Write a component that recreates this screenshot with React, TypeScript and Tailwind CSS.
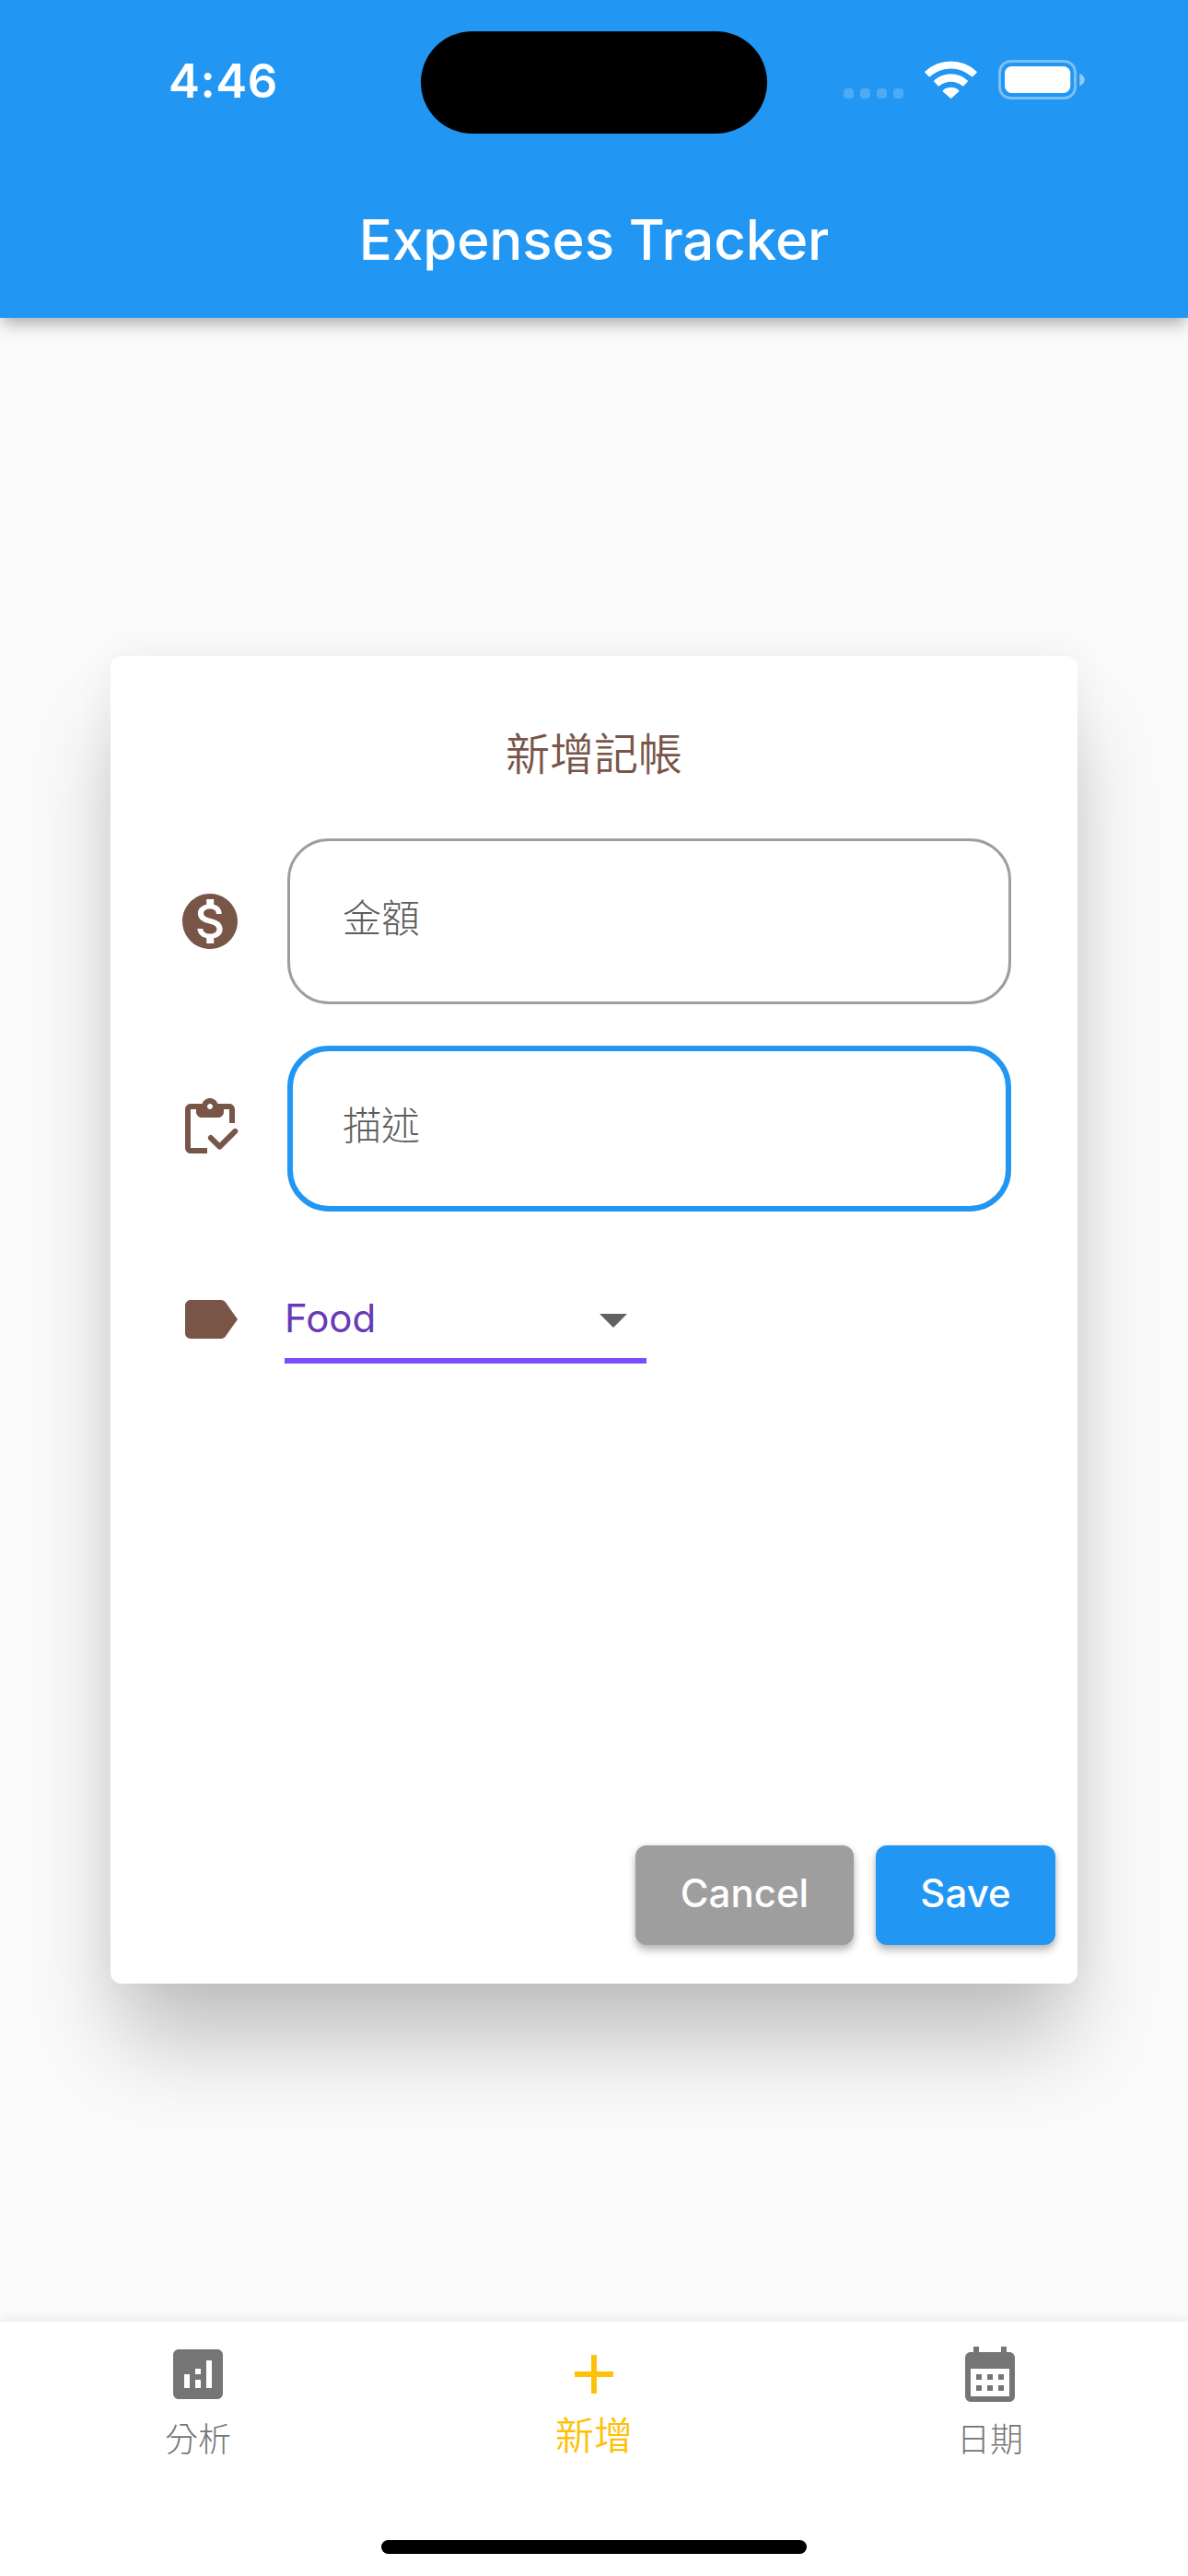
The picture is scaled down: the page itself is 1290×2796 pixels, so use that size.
import type { ReactNode } from "react";
import { MdAdd, MdAnalytics, MdArrowDropDown, MdCalendarMonth, MdLabel, MdMonetizationOn } from "react-icons/md";

function WifiIcon() {
  return (
    <svg width="57" height="42" viewBox="0 0 57 42" fill="#fff" className="ml-[23px]">
      <path d="M0.5 14.1Q-0.2 13.3 0.6 12.6A40.5 40.5 0 0 1 56.4 12.6Q57.2 13.3 56.5 14.1L52.3 18.1Q51.7 18.7 51 18.1A33.5 33.5 0 0 0 6 18.1Q5.3 18.7 4.7 18.1Z" />
      <path d="M10.4 23.8Q9.6 23 10.5 22.2A26.6 26.6 0 0 1 46.5 22.2Q47.4 23 46.6 23.8L42.4 28.2Q41.7 28.9 41 28.2A19.5 19.5 0 0 0 16 28.2Q15.3 28.9 14.6 28.2Z" />
      <path d="M20 34.4Q19.3 33.7 20 33A12.6 12.6 0 0 1 37 33Q37.7 33.7 37 34.4L29.2 41.6Q28.5 42.2 27.8 41.6Z" />
    </svg>
  );
}

function BatteryIcon() {
  return (
    <svg width="94" height="43" viewBox="0 0 94 43" className="ml-[23px]">
      <rect x="1.5" y="1.5" width="82" height="40" rx="12" fill="none" stroke="#fff" strokeOpacity=".4" strokeWidth="3" />
      <rect x="7" y="7" width="71.3" height="29" rx="7.5" fill="#fff" />
      <path d="M88.3 14.8C91.6 16 93.7 18.6 93.7 21.6S91.6 27.2 88.3 28.4z" fill="#fff" fillOpacity=".5" />
    </svg>
  );
}

function ClipboardCheckIcon() {
  return (
    <svg width="72" height="72" viewBox="0 0 24 24" fill="currentColor" className="shrink-0 text-[#795548]">
      <path d="M5 5h2v1c0 1.1.9 2 2 2h6c1.1 0 2-.9 2-2V5h2v5h2V5c0-1.1-.9-2-2-2h-4.18C14.4 1.84 13.3 1 12 1s-2.4.84-2.82 2H5c-1.1 0-2 .9-2 2v14c0 1.1.9 2 2 2h6v-2H5V5zm7-2c.55 0 1 .45 1 1s-.45 1-1 1-1-.45-1-1 .45-1 1-1z" />
      <path d="M12.3 15.35l3.2 3.2L21.1 12.95" fill="none" stroke="currentColor" strokeWidth="2" strokeLinecap="round" strokeLinejoin="round" />
    </svg>
  );
}

function StatusBar() {
  return (
    <div className="flex h-[178px] items-center">
      <div className="w-[457px] pb-[3px] pl-[183px] text-[51px] leading-none font-semibold tracking-[0.5px]">4:46</div>
      <div className="h-[111px] w-[376px] rounded-full bg-black" />
      <div className="flex items-end pb-[5px] pl-[83px]">
        <div className="mb-px flex gap-[7px]">
          {[0, 1, 2, 3].map((i) => (
            <span key={i} className="h-[11px] w-[11px] rounded-[4px] bg-white/20" />
          ))}
        </div>
        <div className="mb-px">
          <WifiIcon />
        </div>
        <BatteryIcon />
      </div>
    </div>
  );
}

function FieldRow({ icon, hint, focused }: { icon: ReactNode; hint: string; focused?: boolean }) {
  return (
    <div className="flex items-center gap-12">
      {icon}
      <div
        className={`flex h-[180px] flex-1 items-center rounded-[45px] pb-[13px] font-['Noto_Sans_CJK_TC',sans-serif] text-[42px] font-light text-[#5c5c5c] ${
          focused ? "border-[6px] border-[#2196f3] pl-[54px]" : "border-[3px] border-[#9e9e9e] pl-[57px]"
        }`}
      >
        {hint}
      </div>
    </div>
  );
}

const buttonBase =
  "flex h-[108px] items-center justify-center rounded-[12px] pb-[6px] text-[42px] font-medium text-white shadow-[0_6px_9px_rgba(0,0,0,0.25),0_0_6px_rgba(0,0,0,0.1)]";

function EntryCard() {
  return (
    <section className="flex h-[1441px] w-[1050px] flex-col rounded-[12px] bg-white shadow-[0_72px_96px_-10px_rgba(0,0,0,0.23),0_0_44px_rgba(0,0,0,0.05)]">
      <h2 className="pt-[67px] text-center font-['Noto_Sans_CJK_TC',sans-serif] text-[48px] leading-[72px] font-[350] text-[#795548]">
        新增記帳
      </h2>
      <div className="mt-[59px] flex flex-col gap-[45px] px-[72px]">
        <FieldRow icon={<MdMonetizationOn className="size-[72px] shrink-0 text-[#795548]" />} hint="金額" />
        <FieldRow icon={<ClipboardCheckIcon />} hint="描述" focused />
      </div>
      <div className="mt-[81px] flex gap-[45px] px-[72px]">
        <MdLabel className="size-[72px] text-[#795548]" />
        <div className="flex h-[84px] w-[393px] items-center justify-between border-b-[6px] border-[#7c4dff] pb-[6px] text-[42px] leading-[70px] text-[#673ab7]">
          <span className="pb-[2px]">Food</span>
          <MdArrowDropDown className="size-[72px] text-[#616161]" />
        </div>
      </div>
      <div className="mt-auto flex justify-end gap-6 pr-6 pb-[42px]">
        <button className={`${buttonBase} w-[237px] bg-[#9e9e9e]`}>Cancel</button>
        <button className={`${buttonBase} w-[195px] bg-[#2196f3]`}>Save</button>
      </div>
    </section>
  );
}

function NavItem({ icon, label, active }: { icon: ReactNode; label: string; active?: boolean }) {
  return (
    <div
      className={`flex flex-1 flex-col items-center font-['Noto_Sans_CJK_TC',sans-serif] leading-[54px] ${
        active ? "gap-px text-[42px] font-[350] text-[#ffc107]" : "gap-[5px] text-[36px] font-light text-[#757575]"
      }`}
    >
      {icon}
      <span>{label}</span>
    </div>
  );
}

export default function App() {
  return (
    <div className="flex h-[2796px] w-[1290px] flex-col overflow-hidden bg-[#fafafa] font-[Inter,sans-serif]">
      <header className="z-10 h-[345px] bg-[#2196f3] text-white shadow-[0_11px_16px_-3px_rgba(0,0,0,0.26),0_0_9px_rgba(0,0,0,0.08)]">
        <StatusBar />
        <h1 className="flex h-[167px] items-center justify-center pb-[3px] text-[60px] font-medium tracking-[-0.1px]">Expenses Tracker</h1>
      </header>
      <main className="flex flex-1 items-center justify-center">
        <EntryCard />
      </main>
      <nav className="z-10 flex h-[276px] flex-col bg-white pt-[21px] shadow-[0_0_12px_rgba(0,0,0,0.1)]">
        <div className="flex">
          <NavItem icon={<MdAnalytics className="size-[72px]" />} label="分析" />
          <NavItem icon={<MdAdd className="size-[72px]" />} label="新增" active />
          <NavItem icon={<MdCalendarMonth className="size-[72px]" />} label="日期" />
        </div>
        <div className="mx-auto mt-auto mb-6 h-[15px] w-[462px] rounded-full bg-black" />
      </nav>
    </div>
  );
}
